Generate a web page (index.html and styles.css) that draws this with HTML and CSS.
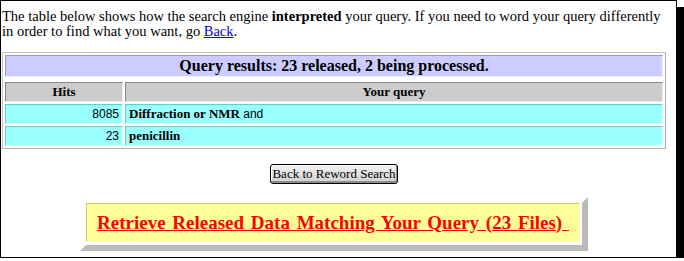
FILE: index.html
```html
<!DOCTYPE html>
<html lang="en">
<head>
  <meta charset="UTF-8" />
  <title>Query results</title>
  <link rel="stylesheet" href="styles.css">
</head>
<body>

  <div class="frame">
    <div class="page">
      <p class="intro">
        The table below shows how the search engine <b>interpreted</b> your query. If you need to word your query differently
        in order to find what you want, go <a href="#">Back</a>.
      </p>

      <table class="results">
        <tr>
          <td colspan="2" class="summary">Query results: 23 released, 2 being processed.</td>
        </tr>
        <tr class="spacer"><td colspan="2"></td></tr>
        <tr>
          <th class="hits">Hits</th>
          <th>Your query</th>
        </tr>
        <tr class="row">
          <td class="num">8085</td>
          <td><b>Diffraction or NMR</b> <span class="op">and</span></td>
        </tr>
        <tr class="row">
          <td class="num">23</td>
          <td><b>penicillin</b></td>
        </tr>
      </table>

      <div class="actions">
        <button class="reword-btn">Back to Reword Search</button>
      </div>

      <div class="retrieve">
        <div class="retrieve-cell">
          <a href="#">Retrieve Released Data Matching Your Query (23 Files)&nbsp;</a>
        </div>
      </div>
    </div>
  </div>

</body>
</html>
```

FILE: styles.css
```css
body {
  margin: 0;
  font-family: "Liberation Serif", "Times New Roman", serif;
  color: #000;
  background: #fff;
}

.frame {
  width: 675px;
  border: 1px solid #000;
  box-shadow: 7px 7px 0 #000;
  background: #fff;
}

.page {
  width: 664px;
  padding: 8px 0 6px 1px;
}

.intro {
  margin: 0;
  font-size: 14.5px;
  line-height: 15px;
}

.intro a {
  color: #0000ee;
}

.results {
  width: 664px;
  margin-top: 13px;
  border-collapse: separate;
  border-spacing: 2px;
  border: 1px solid;
  border-color: #c4c4c4 #b0b0b0 #b0b0b0 #c4c4c4;
}

.results td,
.results th {
  padding: 1px 3px;
  line-height: 16px;
  border: 1px solid;
}

.summary {
  background: #ccccff;
  text-align: center;
  font-weight: bold;
  font-size: 16px;
  padding: 2px 3px !important;
  border-color: #9999cc #eeeeff #eeeeff #9999cc !important;
}

.spacer td {
  height: 1px;
  padding: 0 !important;
  font-size: 0;
  line-height: 0 !important;
  border: none !important;
}

.results th {
  background: #cccccc;
  font-size: 13px;
  border-color: #888 #eee #eee #888;
}

.results th.hits {
  width: 110px;
}

.row td {
  background: #99ffff;
  font-size: 13px;
  border-color: #66cccc #ddffff #ddffff #66cccc;
}

.row td.num {
  text-align: right;
  font-size: 12px;
  font-family: "Liberation Sans", Arial, sans-serif;
}

.op {
  font-size: 12px;
  font-family: "Liberation Sans", Arial, sans-serif;
}

.actions {
  display: flex;
  justify-content: center;
  margin-top: 15px;
}

.reword-btn {
  font-family: "Liberation Serif", "Times New Roman", serif;
  font-size: 13px;
  white-space: nowrap;
  height: 20px;
  width: 128px;
  padding: 0;
  color: #000;
  background: linear-gradient(#f2f2f2, #d0d0d0);
  border: 1px solid #000;
  border-radius: 3px;
  box-shadow: inset -1px -2px 0 #8c8c8c, inset 1px 1px 0 #fff;
}

.retrieve {
  width: 494px;
  margin: 13px auto 0;
  border: 6px solid;
  border-color: #fff #bbbbbb #bbbbbb #fff;
  padding: 0 2px 3px 0;
}

.retrieve-cell {
  background: #ffff99;
  border: 1px solid;
  border-color: #cccc66 #ffffcc #ffffcc #cccc66;
  height: 37px;
  display: flex;
  align-items: center;
  justify-content: center;
}

.retrieve-cell a {
  color: #ff0000;
  font-weight: bold;
  font-size: 19px;
  word-spacing: 2px;
}
```
